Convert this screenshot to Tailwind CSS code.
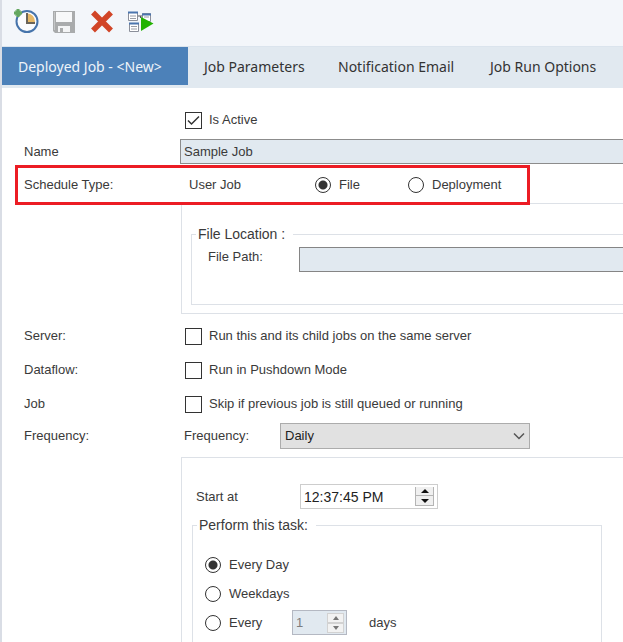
<!DOCTYPE html>
<html lang="en">
<head>
<meta charset="utf-8">
<meta name="viewport" content="width=device-width, initial-scale=1">
<title>Deployed Job</title>
<script src="https://cdn.jsdelivr.net/npm/@tailwindcss/browser@4"></script>
</head>
<body class="bg-white text-[#3a3a3a] font-['Liberation_Sans',Arial,sans-serif] text-[13px] leading-4">
<div class="flex h-screen flex-col overflow-hidden border-l-2 border-[#d9dde5]">

  <header class="flex h-[46px] shrink-0 items-start gap-3 bg-[#f3f6fa] pt-2 pl-3">
    <button type="button" aria-label="New schedule" class="size-[26px]">
      <svg viewBox="0 0 26 26" class="size-[26px]">
        <circle cx="13" cy="13.500" r="10.500" fill="#fbfcfe" stroke="#4674ab" stroke-width="2"/>
        <path d="M13 5.500A8 8 0 0 1 21 13.500V15H13z" fill="#e6b866"/>
        <path d="M13 5V15H21" fill="none" stroke="#6a6459" stroke-width="2"/>
        <path d="M4 1v8M0 5h8" stroke="#64a760" stroke-width="3"/>
        <path d="M1.500 2.500l5 5M6.500 2.500l-5 5" stroke="#64a760" stroke-width="1.500"/>
      </svg>
    </button>
    <button type="button" aria-label="Save" class="size-[26px]">
      <svg viewBox="0 0 26 26" class="size-[26px]">
        <path d="M1 3h22v22H3l-2-2z" fill="#a9abac"/>
        <path d="M4 4h16v10H4z" fill="#f7f8f9"/>
        <path d="M6 18h12v6H6z" fill="#f3f4f5"/>
        <path d="M8 20h3v4H8z" fill="#a9abac"/>
        <path d="M2.500 4v18" stroke="#c4c6c7"/>
      </svg>
    </button>
    <button type="button" aria-label="Delete" class="size-[26px]">
      <svg viewBox="0 0 26 26" class="size-[26px]"><path d="M3 4.500L21 22.500M21 4.500L3 22.500" stroke="#d14527" stroke-width="5.500"/></svg>
    </button>
    <button type="button" aria-label="Run job" class="size-[26px]">
      <svg viewBox="0 0 26 26" class="size-[26px]">
        <g fill="#fff" stroke="#8b8f9a">
          <path d="M.5 4.500h9v8h-9zM14.500 5.500h8v8h-8zM1.500 15.500h9v8h-9z"/>
        </g>
        <path d="M0 4.500h10M14 6.500h9M1 15.500h10" stroke="#4b75ae" stroke-width="2"/>
        <path d="M2 8h6M2 10.500h6M3 18.500h6M3 21h6M16 9h5" stroke="#9a9da6"/>
        <path d="M10 8h4M12.500 8v2" stroke="#555"/>
        <path d="M13 9L25.500 15.500L13 23z" fill="#22b200"/>
      </svg>
    </button>
  </header>

  <nav class="flex h-[42px] shrink-0 items-start bg-[#e1e9f0] border-t border-[#dbe4ed] font-['Noto_Sans','Open_Sans',sans-serif] text-sm text-[#333]">
    <a href="#" class="flex h-[38px] w-[186px] shrink-0 items-center bg-[#4c81b9] pt-0.5 pl-4 whitespace-nowrap text-[#eef4fa]" aria-current="page">Deployed Job - &lt;New&gt;</a>
    <a href="#" class="flex h-[38px] w-[134px] shrink-0 items-center pt-0.5 pl-4 whitespace-nowrap">Job Parameters</a>
    <a href="#" class="flex h-[38px] w-[152px] shrink-0 items-center pt-0.5 pl-4 whitespace-nowrap">Notification Email</a>
    <a href="#" class="flex h-[38px] shrink-0 items-center pt-0.5 pl-4 whitespace-nowrap">Job Run Options</a>
  </nav>

  <form class="flex grow flex-col pt-5">
    <div class="flex h-6 items-center pl-[183px]">
      <label class="flex items-center gap-[7px]">
        <input type="checkbox" checked class="size-[17px] appearance-none border border-[#333] bg-white">
        <svg viewBox="0 0 17 17" class="pointer-events-none -ml-6 size-[17px]"><path d="M3 8.500l3.500 3.500L14 4.500" fill="none" stroke="#333" stroke-width="1.500"/></svg>
        Is Active
      </label>
    </div>

    <div class="mt-[7px] flex h-[25px] items-center pl-[22px]">
      <label for="name" class="w-[156px] shrink-0">Name</label>
      <input id="name" type="text" value="Sample Job" class="h-[25px] min-w-0 grow border border-r-0 border-[#8c8c8c] bg-[#e1e9f0] pl-[3px] outline-none">
    </div>

    <div class="relative mt-px ml-[13px] flex h-10 w-[515px] items-center border-3 border-[#ec1c24] bg-white pl-1.5" role="radiogroup" aria-labelledby="stype">
      <span id="stype" class="w-[165px] shrink-0">Schedule Type:</span>
      <span class="w-[126px] shrink-0">User Job</span>
      <label class="flex w-[93px] shrink-0 items-center gap-2">
        <input type="radio" name="source" checked class="size-4 appearance-none rounded-full border border-[#333] bg-[radial-gradient(circle,#333_0_4px,#fff_5px)]">File
      </label>
      <label class="flex items-center gap-2">
        <input type="radio" name="source" class="size-4 appearance-none rounded-full border border-[#333] bg-white">Deployment
      </label>
    </div>

    <section class="-mt-0.5 ml-[179px] h-[111px] shrink-0 border border-r-0 border-[#dde1e7] pt-[21px] pl-[9px]">
      <fieldset class="h-20 border border-r-0 border-[#dde1e7] pl-1">
        <legend class="h-[18px] pr-2 pl-0.5 text-sm leading-[18px]">File Location :</legend>
        <div class="flex items-start pl-3 pt-1">
          <label for="path" class="w-[91px] shrink-0 pt-0.5">File Path:</label>
          <input id="path" type="text" class="h-[25px] min-w-0 grow border border-r-0 border-[#858585] bg-[#e1e9f0] outline-none">
        </div>
      </fieldset>
    </section>

    <div class="mt-[5px] flex flex-col pl-[22px]">
      <div class="flex h-[34px] items-center">
        <span class="w-[161px] shrink-0">Server:</span>
        <label class="flex items-center gap-[7px] whitespace-nowrap"><input type="checkbox" class="size-[17px] appearance-none border border-[#333] bg-white">Run this and its child jobs on the same server</label>
      </div>
      <div class="flex h-[34px] items-center">
        <span class="w-[161px] shrink-0">Dataflow:</span>
        <label class="flex items-center gap-[7px] whitespace-nowrap"><input type="checkbox" class="size-[17px] appearance-none border border-[#333] bg-white">Run in Pushdown Mode</label>
      </div>
      <div class="flex h-[34px] items-center">
        <span class="w-[161px] shrink-0">Job</span>
        <label class="flex items-center gap-[7px] whitespace-nowrap"><input type="checkbox" class="size-[17px] appearance-none border border-[#333] bg-white">Skip if previous job is still queued or running</label>
      </div>
      <div class="mt-0.5 flex h-[26px] items-center">
        <span class="w-40 shrink-0">Frequency:</span>
        <label for="freq" class="w-24 shrink-0">Frequency:</label>
        <div class="relative">
          <select id="freq" class="h-[26px] w-[250px] appearance-none border border-[#acacac] bg-[#e1e1e1] pl-1 text-[#222]"><option>Daily</option></select>
          <svg viewBox="0 0 12 8" class="pointer-events-none absolute top-[9px] right-[5px] h-2 w-3"><path d="M1 1.500l5 5 5-5" fill="none" stroke="#555" stroke-width="1.500"/></svg>
        </div>
      </div>
    </div>

    <section class="mt-2 ml-[179px] flex grow flex-col border-t border-l border-[#dde1e7] pt-[26px] pl-2.5">
      <div class="flex items-center pl-1">
        <label for="start" class="w-[104px] shrink-0">Start at</label>
        <div class="flex h-[25px] w-[138px] items-center border border-[#cdcdcd] bg-white pr-[3px]">
          <input id="start" type="text" value="12:37:45 PM" class="min-w-0 grow bg-transparent pl-[3px] text-sm text-[#222] outline-none">
          <span class="flex h-[19px] w-[19px] shrink-0 flex-col">
            <button type="button" aria-label="Later" class="flex h-[9px] items-center justify-center border border-t-0 border-[#b5b5b5] bg-[#f0f0f0]"><svg viewBox="0 0 8 4" class="h-1 w-2"><path d="M0 4l4-4 4 4z" fill="#111"/></svg></button>
            <button type="button" aria-label="Earlier" class="flex h-2.5 items-center justify-center border border-t-0 border-[#b5b5b5] bg-[#f0f0f0]"><svg viewBox="0 0 8 4" class="h-1 w-2"><path d="M0 0l4 4 4-4z" fill="#111"/></svg></button>
          </span>
        </div>
      </div>

      <fieldset class="mt-[7px] mr-[21px] grow border border-b-0 border-[#dde1e7] pl-1">
        <legend class="h-[18px] pr-2 pl-0.5 text-sm leading-[18px]">Perform this task:</legend>
        <div class="flex flex-col pt-4 pl-2">
          <label class="flex h-[29px] items-center gap-2"><input type="radio" name="day" checked class="size-4 appearance-none rounded-full border border-[#333] bg-[radial-gradient(circle,#333_0_4px,#fff_5px)]">Every Day</label>
          <label class="flex h-[29px] items-center gap-2"><input type="radio" name="day" class="size-4 appearance-none rounded-full border border-[#333] bg-white">Weekdays</label>
          <div class="flex h-[29px] items-center">
            <label class="flex w-[87px] items-center gap-2"><input type="radio" name="day" class="size-4 appearance-none rounded-full border border-[#333] bg-white">Every</label>
            <div class="flex h-[25px] w-[55px] items-center border border-[#b4b8c2] bg-[#e1e9f0] pr-0.5">
              <input type="text" aria-label="Days between runs" value="1" disabled class="min-w-0 grow bg-transparent pl-[3px] text-[#7d7d7d] outline-none">
              <span class="flex h-5 w-[17px] shrink-0 flex-col">
                <button type="button" disabled aria-label="More days" class="flex h-2.5 items-center justify-center border border-[#d2d2d2] bg-[#f2f2f2]"><svg viewBox="0 0 8 4" class="h-1 w-2"><path d="M1 4l3-4 3 4z" fill="#777"/></svg></button>
                <button type="button" disabled aria-label="Fewer days" class="flex h-2.5 items-center justify-center border border-[#d2d2d2] bg-[#f2f2f2]"><svg viewBox="0 0 8 4" class="h-1 w-2"><path d="M1 0l3 4 3-4z" fill="#777"/></svg></button>
              </span>
            </div>
            <span class="pl-[22px]">days</span>
          </div>
        </div>
      </fieldset>
    </section>
  </form>
</div>
</body>
</html>
